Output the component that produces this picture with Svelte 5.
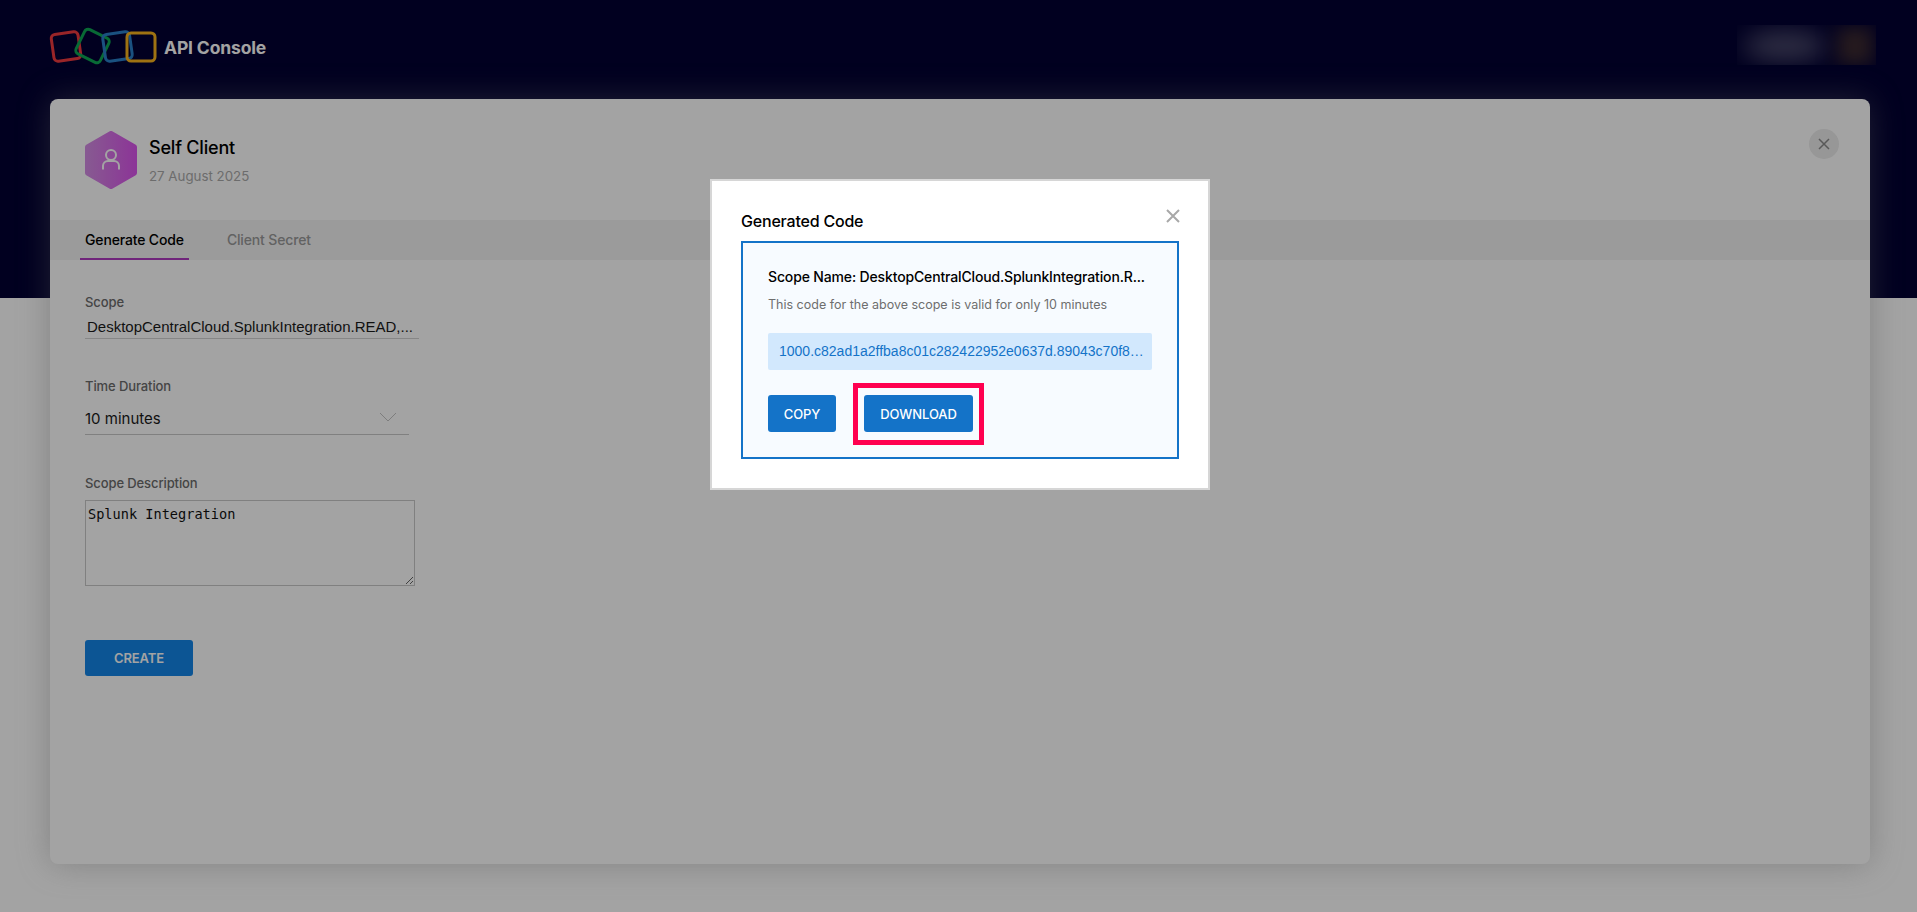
<script>
  let scope = "DesktopCentralCloud.SplunkIntegration.READ,...";
  let description = "Splunk Integration";
  let tabs = ["Generate Code", "Client Secret"];
  let active = 0;
</script>

<div class="page">
  <header class="topbar">
    <svg class="logo" width="110" height="40" viewBox="0 0 110 40" fill="none" stroke-width="3">
      <rect x="3.500" y="6" width="27" height="27" rx="4" transform="rotate(-8 17 19.500)" stroke="#f03a3f" />
      <rect x="30" y="5.500" width="27" height="27" rx="4" transform="rotate(26 43.500 19)" stroke="#0ea653" />
      <rect x="55" y="6" width="27" height="27" rx="4" transform="rotate(-8 68.500 19.500)" stroke="#2a7fc8" />
      <rect x="78" y="6" width="28" height="28" rx="4" stroke="#f7b21d" />
    </svg>
    <span class="brand">API Console</span>
    <div class="account">
      <div class="blur-name"></div>
      <div class="blur-avatar"></div>
    </div>
  </header>

  <main class="card">
    <section class="card-head">
      <svg class="hex" width="52" height="58" viewBox="0 0 52 58">
        <defs>
          <linearGradient id="hexfill" x1="0" x2="1" y1="0" y2="0">
            <stop offset="0" stop-color="#d48be4" />
            <stop offset="1" stop-color="#da55ec" />
          </linearGradient>
        </defs>
        <polygon points="26,2.500 49.500,16 49.500,42 26,55.500 2.500,42 2.500,16" fill="url(#hexfill)" stroke="url(#hexfill)" stroke-width="5" stroke-linejoin="round" />
        <circle cx="26" cy="24" r="5" fill="none" stroke="#fff" stroke-width="2" />
        <path d="M18 38.500v-3.500a5 5 0 0 1 5-5h6a5 5 0 0 1 5 5v3.500" fill="none" stroke="#fff" stroke-width="2" />
      </svg>
      <div class="head-text">
        <h1>Self Client</h1>
        <p>27 August 2025</p>
      </div>
      <button class="round-close" aria-label="Close">
        <svg width="12" height="12" viewBox="0 0 12 12" stroke="#8c8c8c" stroke-width="1.500">
          <path d="M1 1l10 10M11 1L1 11" />
        </svg>
      </button>
    </section>

    <nav class="tabs">
      {#each tabs as tab, i}
        <span class="tab" class:active={i === active}>{tab}</span>
      {/each}
    </nav>

    <form class="form">
      <label class="label" for="scope">Scope</label>
      <input id="scope" class="scope-input" value={scope} readonly />

      <span class="label duration-label">Time Duration</span>
      <div class="select">
        <span>10 minutes</span>
        <svg width="18" height="10" viewBox="0 0 18 10" fill="none" stroke="#c4c4c4" stroke-width="1">
          <path d="M1 1l8 8 8-8" />
        </svg>
      </div>

      <label class="label desc-label" for="desc">Scope Description</label>
      <textarea id="desc" class="desc" value={description}></textarea>

      <button type="button" class="btn create">CREATE</button>
    </form>
  </main>
</div>

<div class="overlay">
  <div class="modal">
    <button class="modal-close" aria-label="Close">
      <svg width="14" height="14" viewBox="0 0 14 14" stroke="#a8a8a8" stroke-width="2">
        <path d="M1 1l12 12M13 1L1 13" />
      </svg>
    </button>
    <h2>Generated Code</h2>
    <div class="code-box">
      <h3>Scope Name: DesktopCentralCloud.SplunkIntegration.R...</h3>
      <p>This code for the above scope is valid for only 10 minutes</p>
      <div class="code">1000.c82ad1a2ffba8c01c282422952e0637d.89043c70f8…</div>
      <div class="actions">
        <button class="btn copy">COPY</button>
        <div class="marked">
          <button class="btn download">DOWNLOAD</button>
          <span class="marker"></span>
        </div>
      </div>
    </div>
  </div>
</div>

<style>
  :global(body) {
    margin: 0;
    font-family: Inter, "Noto Sans", sans-serif;
  }

  .page {
    height: 912px;
    box-sizing: border-box;
    padding: 0 47px 0 50px;
    overflow: hidden;
    background: linear-gradient(#020032 298px, #fff 298px);
  }

  .topbar {
    height: 99px;
    display: flex;
    align-items: flex-start;
    padding-top: 27px;
    box-sizing: border-box;
  }

  .logo {
    display: block;
    flex: none;
    margin-left: -1px;
  }

  .brand {
    margin: 10px 0 0 5px;
    font-size: 17.500px;
    line-height: 21px;
    font-weight: 700;
    letter-spacing: -0.15px;
    color: #fff;
  }

  .account {
    margin: -2px -6px 0 auto;
    width: 139px;
    height: 40px;
    position: relative;
    overflow: hidden;
  }

  .blur-name {
    position: absolute;
    left: 6px;
    top: 6px;
    width: 84px;
    height: 30px;
    background: #4d4b6c;
    border-radius: 50%;
    filter: blur(12px);
  }

  .blur-avatar {
    position: absolute;
    left: 100px;
    top: 2px;
    width: 36px;
    height: 38px;
    background: #3c2a30;
    filter: blur(9px);
  }

  .card {
    height: 765px;
    background: #fff;
    border-radius: 8px;
    box-shadow: 0 0 32px rgba(130, 130, 130, 0.4);
    overflow: hidden;
  }

  .card-head {
    height: 121px;
    box-sizing: border-box;
    padding: 32px 31px 0 35px;
    display: flex;
    align-items: flex-start;
  }

  .hex {
    flex: none;
    display: block;
  }

  .head-text {
    margin-left: 12px;
    flex: 1;
  }

  h1 {
    margin: 6px 0 0;
    font-size: 18px;
    line-height: 22px;
    font-weight: 500;
    letter-spacing: -0.2px;
    color: #000;
  }

  .head-text p {
    margin: 8px 0 0;
    font-size: 13.300px;
    line-height: 18px;
    color: #aaa;
  }

  .round-close {
    width: 30px;
    height: 30px;
    margin-top: -2px;
    padding: 0;
    border: 0;
    border-radius: 50%;
    background: #ececec;
    display: flex;
    align-items: center;
    justify-content: center;
  }

  .tabs {
    height: 40px;
    padding-left: 30px;
    display: flex;
    gap: 33px;
    background: #f2f2f2;
  }

  .tab {
    padding: 0 5px;
    font-size: 14px;
    line-height: 40px;
    font-weight: 500;
    letter-spacing: -0.15px;
    color: #9a9a9a;
    box-sizing: border-box;
    height: 40px;
  }

  .tab.active {
    color: #000;
    border-bottom: 2px solid #b03bc0;
  }

  .form {
    padding: 34px 0 0 35px;
    display: flex;
    flex-direction: column;
    align-items: flex-start;
  }

  .label {
    font-size: 13px;
    line-height: 16px;
    font-weight: 500;
    letter-spacing: -0.1px;
    color: #6c6c6c;
  }

  .scope-input {
    width: 334px;
    box-sizing: border-box;
    margin-top: 5px;
    padding: 0 2px;
    height: 24px;
    border: 0;
    border-bottom: 1px solid #d2d2d2;
    outline: 0;
    background: none;
    font-family: "Liberation Sans", Arial, sans-serif;
    font-size: 15px;
    color: #1a1a1a;
  }

  .duration-label {
    margin-top: 39px;
  }

  .select {
    width: 324px;
    height: 26px;
    margin-top: 14px;
    border-bottom: 1px solid #c8c8c8;
    display: flex;
    align-items: flex-start;
    justify-content: space-between;
    font-size: 15px;
    line-height: 22px;
    color: #1a1a1a;
  }

  .select svg {
    margin: 4px 12px 0 0;
  }

  .desc-label {
    margin-top: 40px;
  }

  .desc {
    width: 330px;
    height: 86px;
    box-sizing: border-box;
    margin: 9px 0 0;
    padding: 5px 2px;
    border: 1px solid #c8c8c8;
    outline: 0;
    font-family: "DejaVu Sans Mono", monospace;
    font-size: 13.600px;
    line-height: 16px;
    color: #111;
  }

  .btn {
    height: 37px;
    padding: 0;
    border: 0;
    border-radius: 3px;
    background: #1473c8;
    color: #fff;
    font-family: Inter, sans-serif;
    font-size: 13px;
    font-weight: 500;
    letter-spacing: -0.1px;
  }

  .copy {
    width: 68px;
  }

  .download {
    width: 109px;
    display: block;
  }

  .create {
    width: 108px;
    height: 36px;
    margin-top: 54px;
    background: #1385e8;
    font-weight: 600;
  }

  .overlay {
    position: fixed;
    inset: 0;
    background: rgba(0, 0, 0, 0.36);
    display: flex;
    justify-content: center;
    align-items: flex-start;
    padding: 179px 0 0 3px;
    box-sizing: border-box;
  }

  .modal {
    width: 500px;
    height: 311px;
    box-sizing: border-box;
    padding: 30px 29px;
    position: relative;
    background: #fff;
    border: 2px solid #d6d6d6;
  }

  .modal-close {
    position: absolute;
    top: 28px;
    right: 28px;
    padding: 0;
    border: 0;
    background: none;
    line-height: 0;
  }

  h2 {
    margin: 0 0 9px;
    font-size: 16px;
    line-height: 21px;
    font-weight: 500;
    letter-spacing: -0.2px;
    color: #000;
  }

  .code-box {
    height: 218px;
    box-sizing: border-box;
    padding: 25px 25px 0;
    background: #f7fbff;
    border: 2px solid #1473c8;
  }

  h3 {
    margin: 0;
    font-size: 14px;
    line-height: 18px;
    font-weight: 500;
    letter-spacing: -0.15px;
    color: #000;
    white-space: nowrap;
  }

  .code-box p {
    margin: 11px 0 0;
    font-size: 12.500px;
    line-height: 16px;
    color: #6e6e6e;
  }

  .code {
    height: 37px;
    margin-top: 20px;
    padding: 0 0 0 11px;
    box-sizing: border-box;
    background: #d2e8fd;
    border-radius: 2px;
    font-family: "Liberation Sans", Arial, sans-serif;
    font-size: 14px;
    line-height: 37px;
    color: #1473c8;
    white-space: nowrap;
  }

  .actions {
    margin-top: 25px;
    display: flex;
    gap: 28px;
  }

  .marked {
    position: relative;
  }

  .marker {
    position: absolute;
    inset: -12px -11px -13px;
    border: 5px solid #ff0050;
    pointer-events: none;
  }
</style>
